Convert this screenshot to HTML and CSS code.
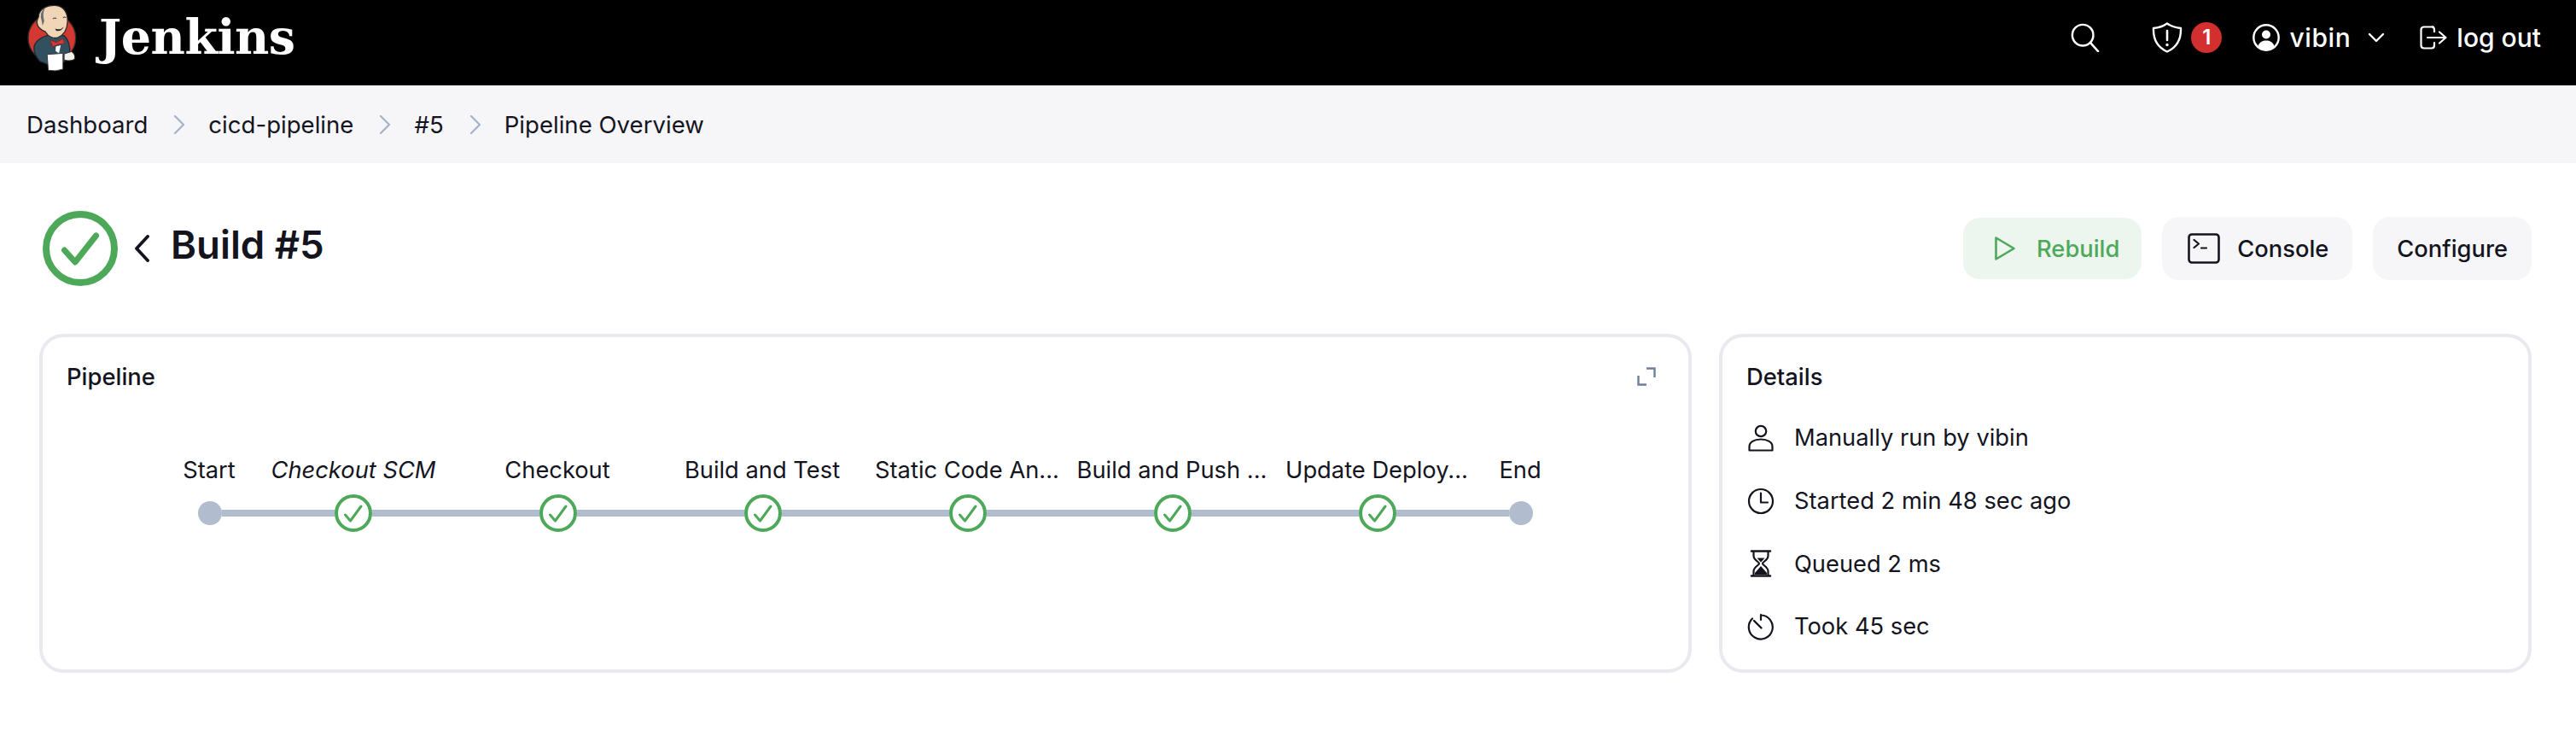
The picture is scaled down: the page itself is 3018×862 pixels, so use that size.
FILE: index.html
```html
<!DOCTYPE html>
<html lang="en">
<head>
<meta charset="utf-8">
<title>Build #5 - Pipeline Overview</title>
<link rel="stylesheet" href="styles.css">
</head>
<body>
<header class="topbar">
  <a class="brand">
    <svg class="brand-logo" viewBox="90 5 190 250">
      <circle cx="183" cy="130" r="84" fill="#d33833" stroke="#3a2a28" stroke-width="4"/>
      <path d="M120 160 C126 140 150 122 178 120 L226 122 C240 134 248 160 246 190 L226 214 L166 222 L140 212 C128 198 118 180 120 160Z" fill="#335061" stroke="#1c2a33" stroke-width="4"/>
      <path d="M136 55 C136 28 166 14 194 15 C224 17 240 40 238 72 C237 95 228 118 205 128 C190 134 170 126 160 108 C150 104 132 96 130 76 C129 66 134 60 136 55Z" fill="#f0d6b7" stroke="#2e2a28" stroke-width="4"/>
      <path d="M146 66 C140 50 146 32 160 22 C150 40 152 52 156 70 L150 86Z" fill="#6d6b6d"/>
      <path d="M186 62 Q192 57 199 61 M222 58 Q228 54 233 58" fill="none" stroke="#2e2a28" stroke-width="3"/>
      <path d="M194 97 Q212 104 226 90 Q214 110 198 104Z" fill="#2e2a28"/>
      <path d="M176 136 L198 146 L222 132 L228 150 L206 152 L186 162Z" fill="#d33833" stroke="#7a1d1a" stroke-width="2"/>
      <path d="M197 160 L214 156 L208 184 L196 176Z" fill="#fff"/>
      <path d="M166 188 L222 184 L222 240 Q196 250 170 244Z" fill="#fff" stroke="#3a3a3a" stroke-width="3"/>
      <path d="M226 186 L252 178 Q266 186 264 204 Q250 214 226 208Z" fill="#f5f0ea" stroke="#2e2a28" stroke-width="3"/>
    </svg>
    <span class="brand-name">Jenkins</span>
  </a>
  <nav class="top-actions">
    <svg class="ico-search" viewBox="0 0 36 36"><circle cx="15" cy="15" r="13" fill="none" stroke="#fff" stroke-width="2.6"/><path d="M24.5 24.5L34 35" fill="none" stroke="#fff" stroke-width="2.6" stroke-linecap="round"/></svg>
    <svg class="ico-shield" viewBox="0 0 36 36"><path d="M18 1.5C23 5 28 6.5 34 7C34.5 20 30 29 18 34.5C6 29 1.5 20 2 7C8 6.5 13 5 18 1.5Z" fill="none" stroke="#fff" stroke-width="2.4" stroke-linejoin="round"/><path d="M18 10V21" stroke="#fff" stroke-width="2.6" stroke-linecap="round"/><circle cx="18" cy="26.5" r="1.7" fill="#fff"/></svg>
    <span class="badge">1</span>
    <svg class="ico-user" viewBox="0 0 32 32"><circle cx="16" cy="16" r="14.7" fill="none" stroke="#fff" stroke-width="2.4"/><circle cx="16" cy="12.5" r="5" fill="#fff"/><path d="M6.5 26C8 21 12 19.5 16 19.5S24 21 25.5 26C23 29.5 19.5 30.5 16 30.5S9 29.5 6.5 26Z" fill="#fff"/></svg>
    <span class="top-label user-name">vibin</span>
    <svg class="ico-caret" viewBox="0 0 20 14"><path d="M2 3L10 11L18 3" fill="none" stroke="#fff" stroke-width="2.4" stroke-linecap="round" stroke-linejoin="round"/></svg>
    <svg class="ico-logout" viewBox="0 0 32 28"><path d="M16 1.5H5Q1.5 1.5 1.5 5V23Q1.5 26.5 5 26.5H14Q17 26.5 17 23V20" fill="none" stroke="#fff" stroke-width="2.2" stroke-linecap="round"/><path d="M17 8V5Q17 1.5 14 1.5" fill="none" stroke="#fff" stroke-width="2.2"/><path d="M9 14H30M23 7.5L30.5 14L23 20.5" fill="none" stroke="#fff" stroke-width="2.2" stroke-linecap="round" stroke-linejoin="round"/></svg>
    <span class="top-label">log out</span>
  </nav>
</header>

<nav class="crumbs">
  <span class="crumb">Dashboard</span>
  <svg class="crumb-sep" viewBox="0 0 14 22"><path d="M2 1L12 11L2 21" fill="none" stroke="#a3b1c9" stroke-width="2.2" stroke-linecap="round" stroke-linejoin="round"/></svg>
  <span class="crumb">cicd-pipeline</span>
  <svg class="crumb-sep" viewBox="0 0 14 22"><path d="M2 1L12 11L2 21" fill="none" stroke="#a3b1c9" stroke-width="2.2" stroke-linecap="round" stroke-linejoin="round"/></svg>
  <span class="crumb">#5</span>
  <svg class="crumb-sep" viewBox="0 0 14 22"><path d="M2 1L12 11L2 21" fill="none" stroke="#a3b1c9" stroke-width="2.2" stroke-linecap="round" stroke-linejoin="round"/></svg>
  <span class="crumb">Pipeline Overview</span>
</nav>

<main class="page">
  <section class="title-row">
    <svg class="status-big" viewBox="0 0 88 88"><circle cx="44" cy="44" r="40" fill="none" stroke="#4ea85a" stroke-width="8"/><path d="M25.5 46L38 60L62.5 29" fill="none" stroke="#4ea85a" stroke-width="7" stroke-linecap="round" stroke-linejoin="round"/></svg>
    <svg class="back" viewBox="0 0 18 32"><path d="M16 2L3 16L16 30" fill="none" stroke="#14141f" stroke-width="3.8" stroke-linecap="round" stroke-linejoin="round"/></svg>
    <h1 class="title">Build #5</h1>
    <div class="buttons">
      <a class="btn btn-rebuild">
        <svg class="ico-play" viewBox="0 0 26 30"><path d="M2.5 2.5L23.5 15L2.5 27.5Z" fill="none" stroke="#4ea85a" stroke-width="2.6" stroke-linejoin="round"/></svg>
        Rebuild
      </a>
      <a class="btn btn-console">
        <svg class="ico-console" viewBox="0 0 38 36"><rect x="1.5" y="1.5" width="35" height="33" rx="3.5" fill="none" stroke="#14141f" stroke-width="2.6"/><path d="M7.5 8L13 12.5L7.5 17M16 17.5H22" fill="none" stroke="#14141f" stroke-width="2.2" stroke-linecap="round" stroke-linejoin="round"/></svg>
        Console
      </a>
      <a class="btn">Configure</a>
    </div>
  </section>

  <section class="cards">
    <article class="card">
      <div class="card-head">
        <h2 class="card-title">Pipeline</h2>
        <svg class="ico-expand" viewBox="0 0 22 22"><path d="M11 1.5H20.5V12M1.5 10V20.5H11" fill="none" stroke="#6d7f9b" stroke-width="2.4"/></svg>
      </div>
      <div class="graph">
        <div class="stage stage-end"><span class="stage-label">Start</span><div class="track"><i class="spacer"></i><i class="dot"></i><i class="line"></i></div></div>
        <div class="stage"><span class="stage-label stage-label-syn">Checkout SCM</span><div class="track"><i class="line"></i><svg class="node" viewBox="0 0 44 44"><circle cx="22" cy="22" r="20" fill="#fff" stroke="#4ea85a" stroke-width="4"/><path d="M12.5 24L18.5 31L31 14" fill="none" stroke="#4ea85a" stroke-width="3" stroke-linecap="round" stroke-linejoin="round"/></svg><i class="line"></i></div></div>
        <div class="stage"><span class="stage-label">Checkout</span><div class="track"><i class="line"></i><svg class="node" viewBox="0 0 44 44"><circle cx="22" cy="22" r="20" fill="#fff" stroke="#4ea85a" stroke-width="4"/><path d="M12.5 24L18.5 31L31 14" fill="none" stroke="#4ea85a" stroke-width="3" stroke-linecap="round" stroke-linejoin="round"/></svg><i class="line"></i></div></div>
        <div class="stage"><span class="stage-label">Build and Test</span><div class="track"><i class="line"></i><svg class="node" viewBox="0 0 44 44"><circle cx="22" cy="22" r="20" fill="#fff" stroke="#4ea85a" stroke-width="4"/><path d="M12.5 24L18.5 31L31 14" fill="none" stroke="#4ea85a" stroke-width="3" stroke-linecap="round" stroke-linejoin="round"/></svg><i class="line"></i></div></div>
        <div class="stage"><span class="stage-label">Static Code An...</span><div class="track"><i class="line"></i><svg class="node" viewBox="0 0 44 44"><circle cx="22" cy="22" r="20" fill="#fff" stroke="#4ea85a" stroke-width="4"/><path d="M12.5 24L18.5 31L31 14" fill="none" stroke="#4ea85a" stroke-width="3" stroke-linecap="round" stroke-linejoin="round"/></svg><i class="line"></i></div></div>
        <div class="stage"><span class="stage-label">Build and Push ...</span><div class="track"><i class="line"></i><svg class="node" viewBox="0 0 44 44"><circle cx="22" cy="22" r="20" fill="#fff" stroke="#4ea85a" stroke-width="4"/><path d="M12.5 24L18.5 31L31 14" fill="none" stroke="#4ea85a" stroke-width="3" stroke-linecap="round" stroke-linejoin="round"/></svg><i class="line"></i></div></div>
        <div class="stage"><span class="stage-label">Update Deploy...</span><div class="track"><i class="line"></i><svg class="node" viewBox="0 0 44 44"><circle cx="22" cy="22" r="20" fill="#fff" stroke="#4ea85a" stroke-width="4"/><path d="M12.5 24L18.5 31L31 14" fill="none" stroke="#4ea85a" stroke-width="3" stroke-linecap="round" stroke-linejoin="round"/></svg><i class="line"></i></div></div>
        <div class="stage stage-end"><span class="stage-label">End</span><div class="track"><i class="line"></i><i class="dot"></i><i class="spacer"></i></div></div>
      </div>
    </article>

    <article class="card">
      <div class="card-head"><h2 class="card-title">Details</h2></div>
      <ul class="details">
        <li class="detail">
          <svg class="detail-ico" viewBox="0 0 32 32"><circle cx="16" cy="8" r="6.2" fill="none" stroke="#14141f" stroke-width="2.2"/><path d="M2.5 30.5V26C2.5 21 8 17.5 16 17.5S29.5 21 29.5 26V30.5Z" fill="none" stroke="#14141f" stroke-width="2.2" stroke-linejoin="round"/></svg>
          <span>Manually run by vibin</span>
        </li>
        <li class="detail">
          <svg class="detail-ico" viewBox="0 0 32 32"><circle cx="16" cy="16" r="14" fill="none" stroke="#14141f" stroke-width="2.2"/><path d="M16 6.5V17.5H24" fill="none" stroke="#14141f" stroke-width="2.2" stroke-linecap="round" stroke-linejoin="round"/></svg>
          <span>Started 2 min 48 sec ago</span>
        </li>
        <li class="detail">
          <svg class="detail-ico" viewBox="0 0 32 32"><path d="M5 1.5H27M5 30.5H27" stroke="#14141f" stroke-width="2.6" stroke-linecap="round"/><path d="M7.5 2V7C7.5 12 14 14 14 16S7.5 20 7.5 25V30M24.5 2V7C24.5 12 18 14 18 16S24.5 20 24.5 25V30" fill="none" stroke="#14141f" stroke-width="2.2"/><path d="M11.5 9.5H20.5L16 14.5ZM16 19L23 27V29H9V27Z" fill="#14141f"/></svg>
          <span>Queued 2 ms</span>
        </li>
        <li class="detail">
          <svg class="detail-ico" viewBox="0 0 32 32"><path d="M16 2.5A14 14 0 1 1 6 6.5" fill="none" stroke="#14141f" stroke-width="2.2" stroke-linecap="round"/><path d="M16 2V8" stroke="#14141f" stroke-width="2.2" stroke-linecap="round"/><path d="M8 9L16.5 17.5" stroke="#14141f" stroke-width="2.4" stroke-linecap="round"/></svg>
          <span>Took 45 sec</span>
        </li>
      </ul>
    </article>
  </section>
</main>
</body>
</html>
```

FILE: styles.css
```css
* { box-sizing: border-box; }
html, body { margin: 0; background: #fff; }
body {
  font-family: Inter, "Noto Sans", sans-serif;
  font-size: 27.3px;
  font-weight: 440;
  color: #14141f;
}
svg { display: block; flex: none; }

.topbar {
  display: flex;
  align-items: center;
  height: 100px;
  padding: 0 41px 12px 33px;
  background: #000;
  color: #fff;
}
.brand { display: flex; align-items: center; }
.brand-logo { width: 63px; height: 83px; margin-left: -3px; }
.brand-name {
  margin-left: 23px;
  font-family: "DejaVu Serif", serif;
  font-size: 55.5px;
  font-weight: 700;
  line-height: 1;
  letter-spacing: -0.5px;
}
.top-actions { display: flex; align-items: center; margin-left: auto; }
.ico-search { width: 34px; height: 34px; }
.ico-shield { width: 36px; height: 36px; margin-left: 61px; }
.badge {
  width: 36px;
  height: 36px;
  margin-left: 10px;
  border-radius: 50%;
  background: #d32f2f;
  color: #fff;
  font-size: 24px;
  font-weight: 600;
  line-height: 36px;
  text-align: center;
}
.ico-user { width: 32px; height: 32px; margin-left: 36px; }
.top-label { font-size: 30px; font-weight: 500; color: #fff; line-height: 36px; }
.user-name { margin-left: 11px; letter-spacing: 0.6px; }
.ico-caret { width: 20px; height: 14px; margin-left: 20px; }
.ico-logout { width: 32px; height: 28px; margin-left: 41px; margin-right: 11px; }

.crumbs {
  display: flex;
  align-items: center;
  height: 91px;
  padding-left: 31px;
  background: #f6f6f9;
  font-size: 27.6px;
}
.crumb-sep { width: 14px; height: 22px; margin: 0 27px 0 30px; }

.page { padding: 56px 52px 0 46px; }
.title-row { display: flex; align-items: center; height: 88px; padding-left: 4px; }
.status-big { width: 88px; height: 88px; }
.back { width: 18px; height: 32px; margin-left: 19px; }
.title {
  margin: 0 0 8px 25px;
  font-size: 45.6px;
  font-weight: 600;
  line-height: 1;
}
.buttons { display: flex; align-items: center; gap: 24px; margin-left: auto; }
.btn {
  display: flex;
  align-items: center;
  height: 74px;
  padding: 0 28px;
  border-radius: 20px;
  background: #f6f6f9;
  font-weight: 500;
}
.btn-rebuild {
  height: 72px;
  gap: 24px;
  padding: 0 26px 0 36px;
  background: #ecf5ee;
  color: #4ea85a;
}
.btn-console { padding-left: 30px; }
.ico-play { width: 26px; height: 30px; }
.ico-console { width: 38px; height: 36px; margin-right: 20px; }

.cards {
  display: grid;
  grid-template-columns: 1936px 1fr;
  grid-template-rows: 397px;
  gap: 32px;
  margin-top: 56px;
}
.card {
  padding: 26px 28px 0;
  border: 4px solid #e9e9ef;
  border-radius: 28px;
}
.card-head { display: flex; align-items: center; justify-content: space-between; height: 40px; }
.card-title { margin: 0; font-size: 27.4px; font-weight: 500; }
.ico-expand { width: 22px; height: 22px; margin-right: 10px; }

.graph { display: flex; margin: 73px 0 0 120px; }
.stage {
  display: flex;
  flex-direction: column;
  align-items: center;
  width: 240px;
}
.stage-end { width: 96px; }
.stage-label { height: 34px; padding-right: 2px; line-height: 34px; white-space: nowrap; }
.stage-label-syn { padding-right: 0; font-style: italic; }
.track { display: flex; align-items: center; align-self: stretch; height: 44px; margin-top: 11px; }
.line { flex: 1; height: 8px; background: #b1bdcf; }
.spacer { flex: 1; }
.dot { flex: none; width: 28px; height: 28px; border-radius: 50%; background: #b1bdcf; }
.node { width: 44px; height: 44px; }

.details { margin: 15px 0 0; padding: 0; list-style: none; }
.detail { display: flex; align-items: center; height: 73.7px; }
.detail-ico { width: 32px; height: 32px; margin-right: 23px; margin-left: 1px; }
```
